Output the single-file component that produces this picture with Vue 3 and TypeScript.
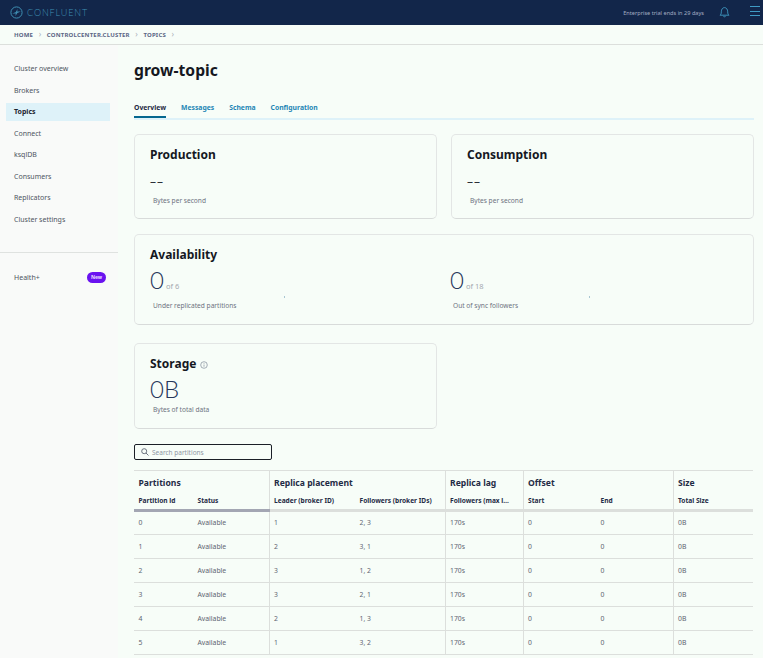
<script setup lang="ts">
const navItems = ['Cluster overview', 'Brokers', 'Topics', 'Connect', 'ksqlDB', 'Consumers', 'Replicators', 'Cluster settings'];
const tabs = ['Overview', 'Messages', 'Schema', 'Configuration'];
const rows = [
  ['0', 'Available', '1', '2, 3'],
  ['1', 'Available', '2', '3, 1'],
  ['2', 'Available', '3', '1, 2'],
  ['3', 'Available', '3', '2, 1'],
  ['4', 'Available', '2', '1, 3'],
  ['5', 'Available', '1', '3, 2'],
];
</script>

<template>
  <div class="page">
    <header class="topbar">
      <div class="logo">
        <svg width="13" height="13" viewBox="0 0 13 13" fill="none">
          <circle cx="6.5" cy="6.5" r="5.6" stroke="#3f8fb3" stroke-width="1" />
          <path d="M2.2 7.4 5.6 6.2 7.6 2.9 7.2 5.6 10.8 5.6 7.4 6.9 5.4 10.1 5.8 7.4Z" fill="#3f8fb3" />
        </svg>
        <span>CONFLUENT</span>
      </div>
      <div class="top-right">
        <span class="trial">Enterprise trial ends in 29 days</span>
        <svg class="bell" width="11" height="12" viewBox="0 0 11 12" fill="none" stroke="#3f9bc4" stroke-width=".9">
          <path d="M1 9.2c1-.9 1.3-1.6 1.3-3.4C2.3 3.4 3.6 1.6 5.5 1.6s3.2 1.8 3.2 4.2c0 1.8.3 2.5 1.3 3.4Z" />
          <path d="M4.3 10.2c.3.8 2.1.8 2.4 0" />
        </svg>
        <div class="burger"><i></i><i></i><i></i></div>
      </div>
    </header>

    <nav class="crumbs">
      <span>HOME</span><b>›</b><span>CONTROLCENTER.CLUSTER</span><b>›</b><span>TOPICS</span><b>›</b>
    </nav>

    <div class="body">
      <aside class="sidebar">
        <ul>
          <li v-for="item in navItems" :key="item" :class="{ active: item === 'Topics' }">{{ item }}</li>
        </ul>
        <div class="health">
          <span>Health+</span>
          <em>New</em>
        </div>
      </aside>

      <main class="content">
        <h1>grow-topic</h1>
        <div class="tabs">
          <a v-for="tab in tabs" :key="tab" :class="{ current: tab === 'Overview' }">{{ tab }}</a>
        </div>

        <div class="two-up">
          <section class="card short">
            <h2>Production</h2>
            <div class="dashes">– –</div>
            <p>Bytes per second</p>
          </section>
          <section class="card short">
            <h2>Consumption</h2>
            <div class="dashes">– –</div>
            <p>Bytes per second</p>
          </section>
        </div>

        <section class="card avail">
          <h2>Availability</h2>
          <div class="avail-grid">
            <div class="metric">
              <div class="big">0<small>of 6</small></div>
              <p>Under replicated partitions</p>
              <i class="tick"></i>
            </div>
            <div class="metric">
              <div class="big">0<small>of 18</small></div>
              <p>Out of sync followers</p>
              <i class="tick"></i>
            </div>
          </div>
        </section>

        <section class="card storage">
          <h2>Storage<svg width="8" height="8" viewBox="0 0 8 8" fill="none" stroke="#7f8b99" stroke-width=".7">
              <circle cx="4" cy="4" r="3.3" />
              <path d="M4 3.5v2.2M4 2.2v.7" />
            </svg></h2>
          <div class="big">0B</div>
          <p>Bytes of total data</p>
        </section>

        <label class="search">
          <svg width="8" height="8" viewBox="0 0 8 8" fill="none" stroke="#5d6673" stroke-width=".9">
            <circle cx="3.2" cy="3.2" r="2.5" />
            <path d="M5 5l2.5 2.5" />
          </svg>
          <span>Search partitions</span>
        </label>

        <table>
          <colgroup>
            <col style="width: 59px" /><col style="width: 76px" /><col style="width: 86px" /><col style="width: 90px" />
            <col style="width: 78px" /><col style="width: 73px" /><col style="width: 77px" /><col />
          </colgroup>
          <thead>
            <tr class="groups">
              <th colspan="2" class="edge">Partitions</th>
              <th colspan="2" class="edge">Replica placement</th>
              <th class="edge">Replica lag</th>
              <th colspan="2" class="edge">Offset</th>
              <th>Size</th>
            </tr>
            <tr class="heads">
              <th class="dark">Partition id</th>
              <th class="dark edge">Status</th>
              <th>Leader (broker ID)</th>
              <th class="edge">Followers (broker IDs)</th>
              <th class="edge nowrap">Followers (max l…</th>
              <th>Start</th>
              <th class="edge">End</th>
              <th>Total Size</th>
            </tr>
          </thead>
          <tbody>
            <tr v-for="row in rows" :key="row[0]">
              <td>{{ row[0] }}</td>
              <td class="edge">{{ row[1] }}</td>
              <td>{{ row[2] }}</td>
              <td class="edge">{{ row[3] }}</td>
              <td class="edge">170s</td>
              <td>0</td>
              <td class="edge">0</td>
              <td>0B</td>
            </tr>
          </tbody>
        </table>
      </main>
    </div>
  </div>
</template>

<style scoped>
.page { width: 763px; height: 658px; overflow: hidden; background: #f7fdf8; color: #15181f; font-family: "Noto Sans", "Open Sans", sans-serif; }
.topbar { height: 25px; display: flex; align-items: center; justify-content: space-between; background: #12264a; padding: 0 3px 0 10px; }
.logo { display: flex; align-items: center; gap: 4px; color: #3f8fb3; font-size: 9px; font-weight: 300; letter-spacing: .9px; font-family: "Lato", sans-serif; }
.top-right { display: flex; align-items: center; }
.trial { color: #a3acc0; font-size: 5.6px; margin-right: 15px; }
.bell { margin-right: 20px; margin-top: -2px; }
.burger { display: flex; flex-direction: column; gap: 3.5px; width: 10px; margin-top: -3px; }
.burger i { display: block; height: 1px; background: #3f9bc4; }
.crumbs { height: 20px; box-sizing: border-box; display: flex; align-items: center; gap: 5.5px; padding-left: 14px; border-bottom: 1px solid #dcdfdc; color: #5b6685; font-size: 6px; font-weight: 700; letter-spacing: .2px; }
.crumbs b { color: #a9b0b8; font-weight: 400; font-size: 8px; line-height: 8px; margin-top: -2px; }
.body { display: flex; }
.sidebar { width: 118px; flex: none; height: 613px; background: #f9faf9; }
.sidebar ul { margin: 0; padding: 15px 0 0; list-style: none; height: 192px; border-bottom: 1px solid #dfe2e0; }
.sidebar li { height: 18px; line-height: 18px; margin: 0 8px 3.5px 6px; padding-left: 8px; font-size: 7px; color: #4e5561; }
.sidebar li.active { background: #def2f9; color: #1d2430; font-weight: 700; }
.health { display: flex; align-items: center; justify-content: space-between; padding: 19px 12px 0 14px; font-size: 7px; color: #4e5561; }
.health em { width: 19px; height: 11px; border-radius: 6px; background: #6a12f0; color: #e9dcff; font-style: normal; font-size: 5px; font-weight: 700; text-align: center; line-height: 10px; }
.content { flex: 1; padding: 0 9px 0 16px; min-width: 0; }
h1 { margin: 0; padding-top: 14px; height: 26px; font-size: 15.7px; line-height: 22px; font-weight: 700; }
.tabs { margin-top: 14px; display: flex; gap: 15px; height: 21px; border-bottom: 2px solid #def2f9; box-sizing: border-box; width: 620px; }
.tabs a { font-size: 6.8px; font-weight: 700; color: #1f86b5; line-height: 17px; height: 19px; }
.tabs a.current { color: #1f2b45; border-bottom: 2px solid #04678f; height: 17px; }
.two-up { margin-top: 14px; display: flex; gap: 14px; }
.card { box-sizing: border-box; border: 1px solid #e3e6e5; border-bottom-color: #d8dbda; border-radius: 5px; padding: 0 15px; background: #f7fdf8; }
.card h2 { margin: 0; font-size: 12px; font-weight: 700; line-height: 16px; }
.card p { margin: 0 0 0 3px; font-size: 6.6px; color: #6d7280; }
.short { width: 303px; height: 85px; padding-top: 12px; }
.dashes { height: 18px; margin-top: 10px; font-size: 12px; word-spacing: -2px; line-height: 18px; color: #2b3038; }
.short p { margin-top: 5px; }
.avail { width: 620px; height: 91px; margin-top: 15px; padding-top: 12px; }
.avail-grid { display: flex; }
.metric { position: relative; width: 300px; margin-top: 5px; }
.metric p { margin-top: 3px; }
.metric:nth-child(2) { margin-left: 12px; }
.tick { position: absolute; top: 28px; left: 134px; width: 1px; height: 2px; background: #a9c6d2; }
.metric:nth-child(2) .tick { left: 139px; }
.big { font-size: 24px; line-height: 24px; font-weight: 300; color: #26365a; font-family: "Lato", sans-serif; }
.big small { margin-left: 2px; font-size: 7.5px; color: #a4a9b0; font-weight: 400; font-family: "Noto Sans", sans-serif; }
.storage { width: 303px; height: 86px; margin-top: 18px; padding-top: 12px; }
.storage h2 svg { margin-left: 4px; vertical-align: -1px; }
.storage .big { margin-top: 5px; }
.storage p { margin-top: 4px; }
.search { margin-top: 15px; width: 138px; height: 16px; box-sizing: border-box; display: flex; align-items: center; gap: 3px; padding-left: 6px; border: 1px solid #1b1f27; border-radius: 2px; font-size: 6.5px; color: #8f96a3; }
table { margin-top: 10px; width: 619px; table-layout: fixed; border-collapse: collapse; border-top: 1px solid #dcdfdc; }
th, td { padding: 0 0 0 4.5px; text-align: left; }
.edge { border-right: 1px solid #dcdfdc; }
.nowrap { white-space: nowrap; }
.groups th { height: 21px; padding-top: 3px; box-sizing: border-box; font-size: 8.6px; font-weight: 700; color: #1f2b45; }
.heads th { height: 19px; box-sizing: border-box; border-bottom: 3px solid #dcdfdc; font-size: 6.6px; font-weight: 700; color: #1f2b45; }
.heads th.dark { border-bottom-color: #a3a6b3; }
td { height: 24px; box-sizing: border-box; border-bottom: 1px solid #dcdfdc; padding-bottom: 1px; font-size: 6.8px; color: #5e6470; }
td.edge { border-right: 1px solid #dcdfdc; }
</style>

<style>
html, body { margin: 0; background: #f7fdf8; }
</style>
